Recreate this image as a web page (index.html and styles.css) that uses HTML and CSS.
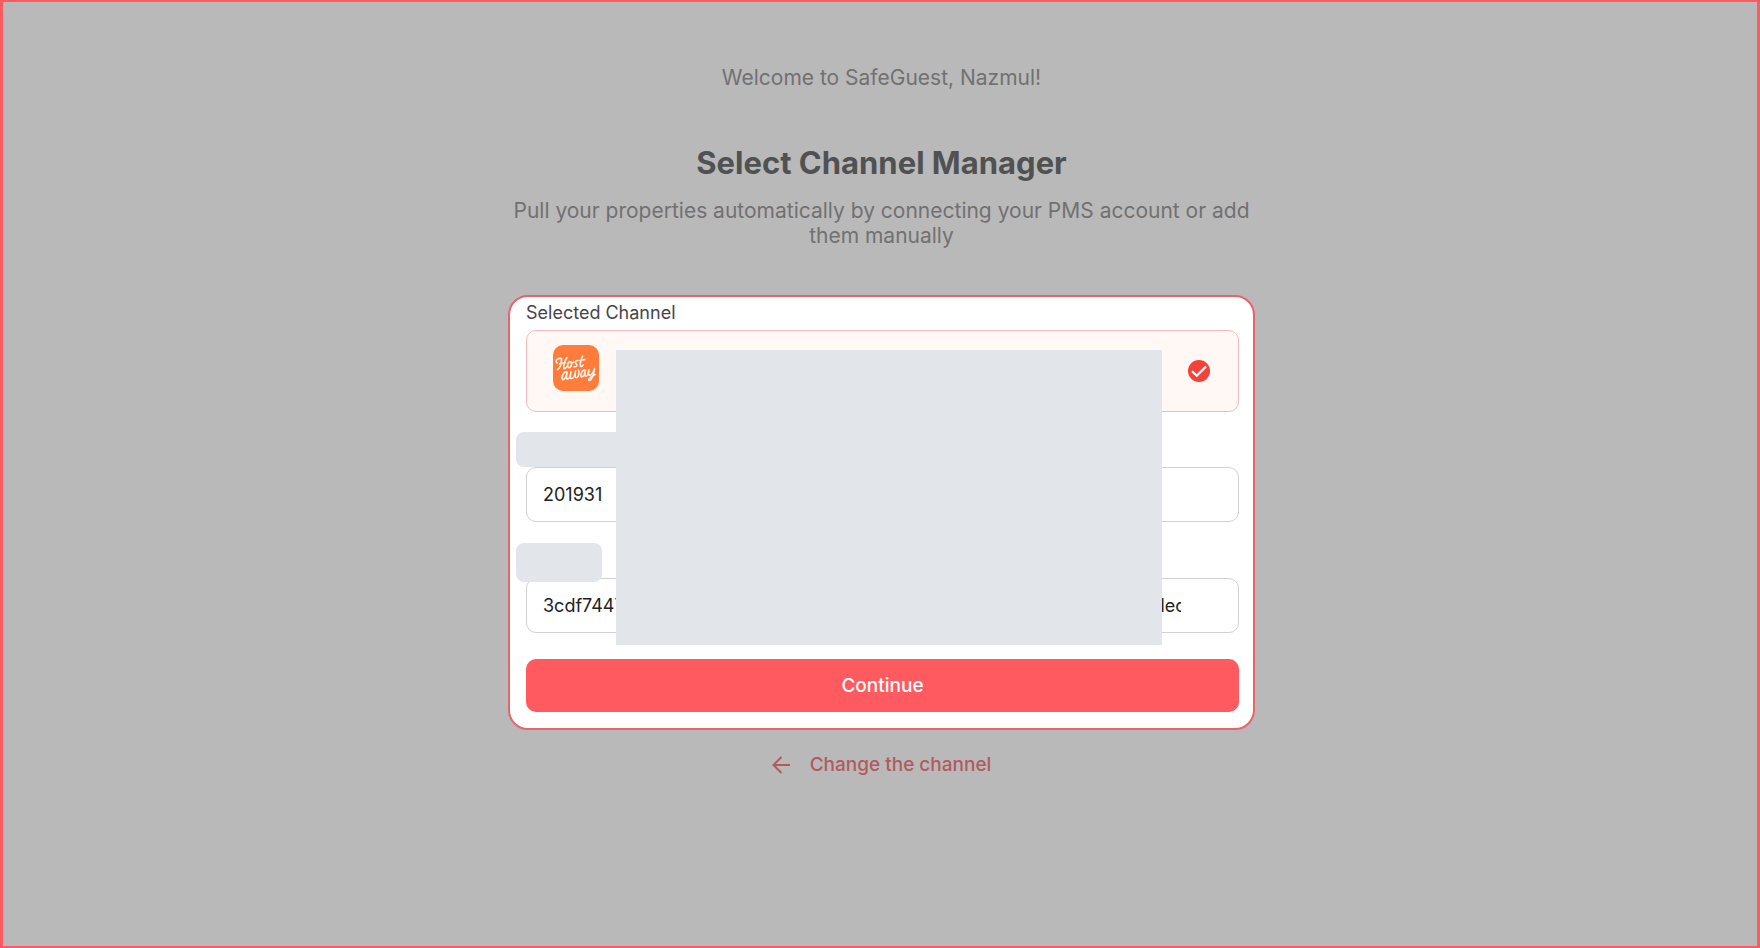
FILE: index.html
```
<!DOCTYPE html>
<html lang="en">
<head>
    <meta charset="UTF-8">
    <meta name="viewport" content="width=device-width, initial-scale=1.0">
    <title>Select Channel Manager</title>
    <link rel="stylesheet" href="styles.css">
</head>
<body>
    <main class="page">
        <p class="welcome">Welcome to SafeGuest, Nazmul!</p>
        <h1>Select Channel Manager</h1>
        <p class="subtitle">Pull your properties automatically by connecting your PMS account or add them manually</p>

        <!-- Connect form -->
        <form class="card">
            <div class="card-label">Selected Channel</div>
            <div class="channel">
                <svg class="channel-logo" viewBox="0 0 46 46" role="img" aria-label="Hostaway">
                    <rect width="46" height="46" rx="10" fill="#ff7c3c"/>
                    <g fill="none" stroke="#fff3e6" stroke-width="1.6" stroke-linecap="round" stroke-linejoin="round">
                        <path d="M4 18C1.500 15 5 13 8.500 13.500C8.500 17 7.500 23 4.500 24.500M14 12.500C11.500 16 10.500 20 10.800 23.200C11.500 24.200 13 22.800 14 21.500M6.500 18.800L12.500 17.600"/>
                        <path d="M17 16.500C14.500 17 13.700 22.600 16 22.700C18.800 22.500 19.500 16.500 17 16.500C18 18.500 20 18 21 17"/>
                        <path d="M24.500 15.500C22.500 15.500 21.500 17 23 18.500C24.600 20 24 22 21 21.800"/>
                        <path d="M29.500 11C28 15 26.700 19.500 27.500 21.200C28.200 22 29.500 21 30.200 20M26 15.500L32 14.500"/>
                        <path d="M14 27C10.500 26 8 32.500 9.500 34.500C11.500 35.500 13.500 31 14.200 27C13.300 31.500 13 34.500 15 34C16.500 33.500 17.500 30.500 18 26.500C17 31.500 17 34 19 33.500C21 33 22 30 22.500 26C21.700 30.500 22 33.200 24 32.600C26 31.500 26.500 27 25.500 25.300"/>
                        <path d="M32 25C29 24.500 27 30.500 28.500 32C30.500 32.500 32 28.500 32.500 25C31.500 29.500 31.500 31.500 33.200 31.200C35 30.500 35.500 28 36 24.500C35 28.500 35.500 30.800 37.200 30.200C39 29.500 40.500 26.500 41.500 23.500C41 28 39.500 34 36.500 35.500C34.500 35.500 36 32.500 42 29.500"/>
                    </g>
                </svg>
                <svg class="channel-check" viewBox="0 0 22 22" aria-hidden="true">
                    <circle cx="11" cy="11" r="11" fill="#f2423a"/>
                    <path d="M4 11.200L8.800 15.800L18 6.500" fill="none" stroke="#fff" stroke-width="2.200"/>
                </svg>
            </div>

            <div class="field">
                <div class="mask mask-account"></div>
                <input type="text" aria-label="Account ID" value="201931">
            </div>
            <div class="field">
                <div class="mask mask-key"></div>
                <input type="text" aria-label="API key" value="3cdf7447f0000000000000000000000000000000000000000000000dec">
            </div>
            <button type="submit" class="continue-button">Continue</button>
            <div class="mask mask-main"></div>
        </form>

        <a href="#" class="back-link">
            <svg class="back-icon" viewBox="0 0 18 18" aria-hidden="true">
                <path d="M18 9H2M9.500 1L1.500 9L9.500 17" fill="none" stroke="currentColor" stroke-width="2"/>
            </svg>
            Change the channel
        </a>
    </main>
</body>
</html>
```
FILE: styles.css
```
* {
    box-sizing: border-box;
}
body {
    margin: 0;
    font-family: Inter, sans-serif;
    background: #b9b9b9;
}
.page {
    display: flex;
    flex-direction: column;
    align-items: center;
    min-height: 100vh;
    padding: 63px 0 32px 3px;
    border: 2px solid #ff5a60;
    border-width: 2px 3px;
}
.welcome {
    margin: 0;
    font-size: 21px;
    line-height: 26px;
    color: #717171;
}
h1 {
    margin: 52px 0 0;
    font-size: 31px;
    line-height: 40px;
    font-weight: 700;
    color: #505152;
}
.subtitle {
    max-width: 747px;
    margin: 15px 0 0;
    font-size: 21px;
    line-height: 25px;
    text-align: center;
    color: #717171;
}
.card {
    position: relative;
    width: 100%;
    max-width: 747px;
    margin-top: 47px;
    padding: 4px 14px 16px 16px;
    background: #fff;
    border: 2px solid #e8636b;
    border-radius: 20px;
}
.card-label {
    font-size: 18px;
    line-height: 24px;
    color: #45464c;
}
.channel {
    display: flex;
    align-items: center;
    justify-content: space-between;
    height: 82px;
    margin-top: 5px;
    padding: 0 28px 0 26px;
    background: #fff8f5;
    border: 1px solid #f3b9c0;
    border-radius: 10px;
}
.channel-logo {
    width: 46px;
    height: 46px;
    margin-bottom: 6px;
}
.channel-check {
    width: 22px;
    height: 22px;
}
.field {
    position: relative;
    margin-top: 56px;
}
.channel + .field {
    margin-top: 55px;
}
.field input {
    display: block;
    width: 100%;
    height: 55px;
    padding: 0 57px 0 16px;
    font: 18px Inter, sans-serif;
    color: #222;
    background: #fff;
    border: 1px solid #d0d0d2;
    border-radius: 10px;
}
/* grey blocks over the private data */
.mask {
    position: absolute;
    background: #e2e6ea;
}
.mask-account {
    left: -10px;
    top: -35px;
    width: 120px;
    height: 35px;
    border-radius: 8px;
}
.mask-key {
    left: -10px;
    top: -35px;
    width: 86px;
    height: 39px;
    border-radius: 8px;
}
.mask-main {
    left: 106px;
    right: 91px;
    top: 53px;
    height: 295px;
}
.continue-button {
    display: block;
    width: 100%;
    height: 53px;
    margin-top: 26px;
    font: 500 19px Inter, sans-serif;
    color: #fff;
    background: #ff5a60;
    border: none;
    border-radius: 10px;
    cursor: pointer;
}
.back-link {
    display: flex;
    align-items: center;
    gap: 20px;
    margin-top: 22px;
    font-size: 19px;
    line-height: 26px;
    font-weight: 500;
    color: #b25a60;
    text-decoration: none;
}
.back-icon {
    width: 18px;
    height: 18px;
}
```
